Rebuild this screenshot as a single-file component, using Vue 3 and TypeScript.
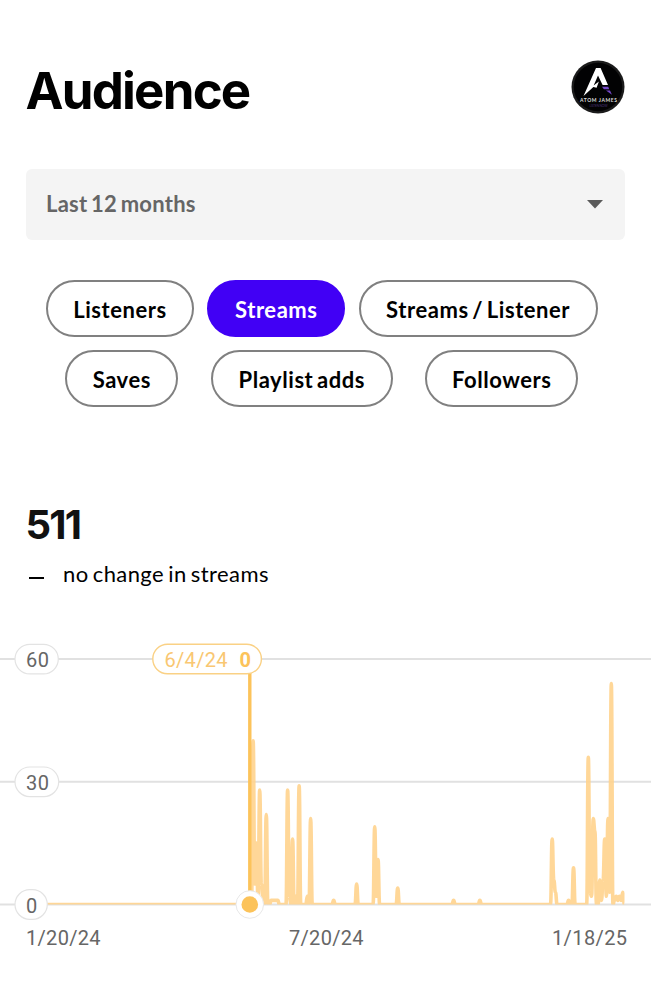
<!--
  AudienceView - streams statistics over the last 12 months.
-->
<template>
  <main class="audience">
    <header class="header">
      <h1 class="title">Audience</h1>
      <svg class="avatar" viewBox="0 0 54 54" role="img" aria-label="Atom James">
        <circle cx="27" cy="27" r="26.5" fill="#1b1b1b" />
        <circle cx="27" cy="27" r="24.2" fill="#020203" />
        <path d="M12.5 36 25 8h4.6L37 25h-5.4L27 15.5l-4.3 10 2.2-1.7 3-2.3-2.3 6.3-3.2-.9Z" fill="#fff" />
        <path d="M31 26.8h6.2l1.1 2.4h-5.4Zm4 3.6h4l2 4.4Z" fill="#7447c7" />
        <text class="avatar-name" x="27.5" y="42.3" textLength="37">ATOM JAMES</text>
        <text class="avatar-sub" x="27.5" y="47" textLength="18">LISTEN NOW</text>
      </svg>
    </header>

    <button class="period" type="button">
      <span>Last 12 months</span>
      <svg class="caret" viewBox="0 0 16 9"><path d="M0 0h16L8 8.5Z" fill="#5a5a5a" /></svg>
    </button>

    <nav class="chips">
      <div v-for="(row, i) in metricRows" :key="i" :class="['chip-row', 'chip-row-' + (i + 1)]">
        <button
          v-for="metric in row"
          :key="metric"
          type="button"
          :class="['chip', { 'chip-active': metric === active }]"
          @click="active = metric"
        >{{ metric }}</button>
      </div>
    </nav>

    <section class="summary">
      <div class="total">511</div>
      <div class="change">
        <span class="dash"></span>
        <span>no change in streams</span>
      </div>
    </section>

    <svg class="chart" viewBox="0 0 651 330">
      <defs>
        <clipPath id="plot"><rect x="26" y="0" width="598.5" height="274.4" /></clipPath>
      </defs>
      <line v-for="t in ticks" :key="t.value" x1="0" x2="651" :y1="yOf(t.value)" :y2="yOf(t.value)" class="grid" />
      <path :d="seriesPath" class="series" clip-path="url(#plot)" />
      <line x1="249.8" x2="249.8" y1="42" :y2="yOf(0)" class="cursor" />

      <g v-for="t in ticks" :key="'l' + t.value">
        <rect x="15" :y="yOf(t.value) - 14.8" :width="t.width" height="29.6" rx="14.8" class="tick-box" />
        <text x="26" :y="yOf(t.value) + 8" class="label" :textLength="t.text">{{ t.value }}</text>
      </g>

      <circle cx="249.8" :cy="yOf(0)" r="13.8" fill="#fff" stroke="#e8e8e8" />
      <circle cx="249.8" :cy="yOf(0)" r="8.3" fill="#fcc35a" />

      <rect x="152.8" y="14.3" width="108.6" height="29.4" rx="14.7" class="tip-box" />
      <text x="164.5" y="37" class="label tip" textLength="63">6/4/24</text>
      <text x="239.5" y="37" class="label tip tip-value">0</text>

      <text x="26" y="314.5" class="label" textLength="74.5">1/20/24</text>
      <text x="289" y="314.5" class="label" textLength="74.5">7/20/24</text>
      <text x="552" y="314.5" class="label" textLength="75">1/18/25</text>
    </svg>
  </main>
</template>

<script setup lang="ts">
import { computed, ref } from 'vue';

interface Tick {
  value: number;
  width: number;
  text: number;
}

const metricRows: string[][] = [
  ['Listeners', 'Streams', 'Streams / Listener'],
  ['Saves', 'Playlist adds', 'Followers'],
];
const active = ref('Streams');

const ticks: Tick[] = [
  { value: 60, width: 43.3, text: 23 },
  { value: 30, width: 43.7, text: 23 },
  { value: 0, width: 32.3, text: 11.5 },
];

// day index -> streams, days left out had none
const streams: Record<number, number> = {
  138: 40, 139: 5, 140: 15, 141: 1, 142: 28, 143: 5, 144: 2, 146: 22,
  149: 1, 150: 1, 151: 1, 152: 1, 153: 1,
  159: 28, 160: 2, 162: 16, 164: 2, 166: 29, 171: 2, 173: 21,
  187: 1, 201: 5, 212: 19, 213: 2, 214: 11, 226: 4, 260: 1, 276: 1,
  320: 16, 321: 6, 322: 3, 330: 1, 333: 9,
  342: 36, 343: 3, 344: 2, 345: 21, 346: 18, 349: 6, 350: 1, 351: 6, 352: 16, 353: 2,
  354: 21, 355: 3, 356: 54, 358: 1, 359: 2, 360: 1, 361: 2, 362: 1, 363: 3,
};

function yOf(value: number) {
  return 274.5 - value * 4.09;
}

/** horizontal tangents at every day keep the spikes rounded and wide at the foot */
const seriesPath = computed(() => {
  const step = 1.643;
  let d = `M26.4 ${yOf(0)}`;
  for (let day = 1; day < 365; day++) {
    const x = 26.4 + day * step;
    const from = yOf(streams[day - 1] ?? 0);
    const to = yOf(streams[day] ?? 0);
    d += `C${(x - step / 2).toFixed(2)} ${from} ${(x - step / 2).toFixed(2)} ${to} ${x.toFixed(2)} ${to}`;
  }
  return d;
});
</script>

<style>
body { background: #fff; margin: 0; }
</style>

<style scoped>
.audience {
  box-sizing: border-box;
  color: #000;
  font-family: Lato, "Liberation Sans", sans-serif;
  height: 1000px;
  overflow: hidden;
  padding-top: 60px;
  width: 651px;
}
.header {
  align-items: center;
  display: flex;
  height: 54px;
  justify-content: space-between;
  padding: 0 26px 0 25.5px;
}
.title {
  font-family: Inter, sans-serif;
  font-size: 51px;
  font-weight: 650;
  letter-spacing: -1.8px;
  line-height: 54px;
  margin: 7px 0 0;
}
.avatar { height: 54px; width: 54px; }
.avatar-name { fill: #ddd; font-size: 5px; font-weight: 700; text-anchor: middle; }
.avatar-sub { fill: #4b3478; font-size: 3.2px; text-anchor: middle; }
.period {
  align-items: center;
  background: #f4f4f4;
  border: none;
  border-radius: 6px;
  color: #666;
  display: flex;
  font: 700 22px/28px Lato, sans-serif;
  height: 71.5px;
  justify-content: space-between;
  letter-spacing: 0.25px;
  margin: 54.5px 26px 0;
  padding: 0 22px 1px 20px;
  width: 598.5px;
  word-spacing: -2px;
}
.caret { height: 9px; margin-top: 2px; width: 16px; }
.chips {
  display: flex;
  flex-direction: column;
  gap: 13px;
  margin-top: 40px;
}
.chip-row { display: grid; }
.chip-row-1 {
  column-gap: 13.3px;
  grid-template-columns: 148px 138px 239px;
  padding-left: 46px;
}
.chip-row-2 {
  column-gap: 32.5px;
  grid-template-columns: 113px 182px 153px;
  padding-left: 65.3px;
}
.chip {
  background: #fff;
  border: 2px solid #808080;
  border-radius: 28.5px;
  color: #000;
  font: 700 22px/28px Lato, sans-serif;
  height: 57px;
  letter-spacing: 0.55px;
  padding: 2px 0 0;
  white-space: nowrap;
  word-spacing: -2.2px;
}
.chip-active { background: #4100f5; border-color: #4100f5; color: #fff; }
.summary { padding: 96px 25.5px 0; }
.total {
  color: #111;
  font: 700 40px/44px Inter, sans-serif;
  letter-spacing: -1.8px;
}
.change {
  align-items: center;
  display: flex;
  font-size: 22px;
  gap: 19px;
  letter-spacing: 0.4px;
  line-height: 28px;
  margin-top: 13px;
  word-spacing: -1.8px;
}
.dash { background: #000; height: 2px; margin: 8px 0 0 3.5px; width: 15px; }
.chart { display: block; height: 330px; margin-top: 42px; width: 651px; }
.grid { stroke: #e1e1e1; stroke-width: 2; }
.series {
  fill: none;
  stroke: #ffd18a;
  stroke-linejoin: round;
  stroke-opacity: 0.88;
  stroke-width: 3.6;
}
.cursor { stroke: #fcc35a; stroke-width: 3.4; }
.tick-box { fill: #fff; stroke: #e3e3e3; stroke-width: 1.2; }
.label { fill: #666; font-family: Roboto, sans-serif; font-size: 20px; }
.tip-box { fill: #fff; stroke: #fad185; stroke-width: 1.4; }
.tip { fill: #f9c772; }
.tip-value { fill: #fcc35a; font-weight: 700; }
</style>
